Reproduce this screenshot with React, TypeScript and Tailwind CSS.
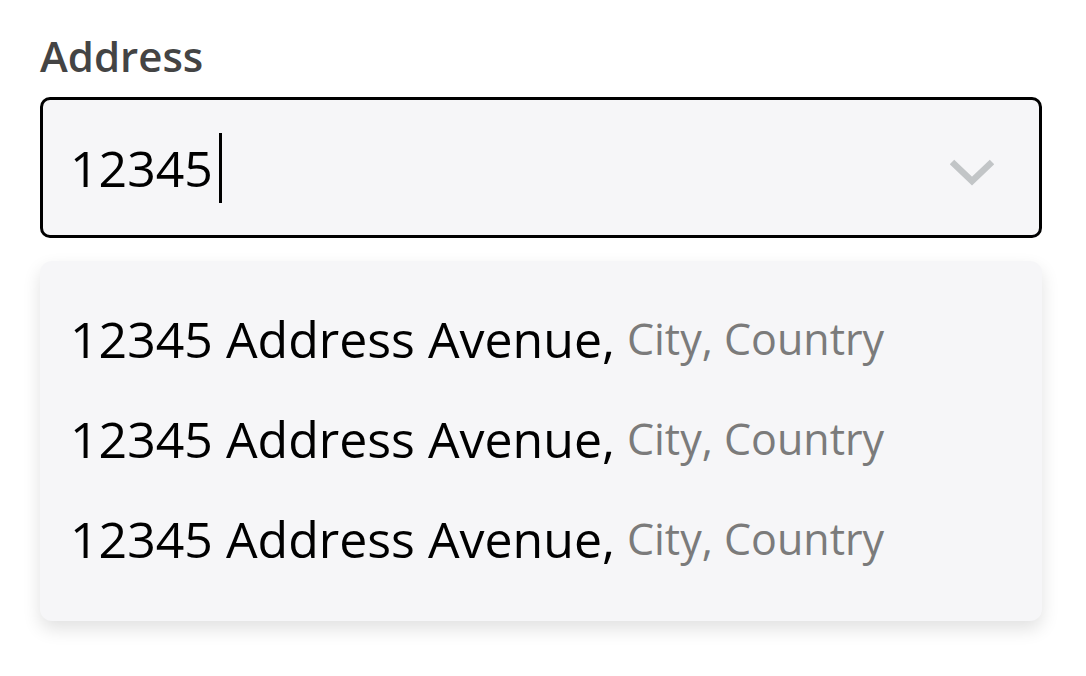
const suggestions = [
  { street: '12345 Address Avenue,', rest: 'City, Country' },
  { street: '12345 Address Avenue,', rest: 'City, Country' },
  { street: '12345 Address Avenue,', rest: 'City, Country' },
]

const App = () => {
  return (
    <div className="min-h-screen bg-white pl-10 pr-[44px] pt-[28px] font-['Open_Sans',sans-serif]">
      <label className="block text-[42px] font-semibold leading-[56px] text-[#444444]">Address</label>

      <div className="mt-[13px] flex h-[141px] items-center rounded-[10px] border-[3px] border-black bg-[#f6f6f8] pl-[27px] pr-[45px]">
        <div className="flex flex-1 items-center">
          <span className="text-[50px] leading-none text-black">12345</span>
          <span className="ml-[6px] h-[70px] w-[3px] bg-black" />
        </div>
        <svg className="mt-[10px]" width="44" height="30" viewBox="0 0 44 30" fill="none">
          <path d="M2 4 L22 23 L42 4" stroke="#c2c5c7" strokeWidth="6.5" />
        </svg>
      </div>

      <ul className="mt-[23px] rounded-[12px] bg-[#f6f6f8] pb-[32px] pt-[28px] pl-[30px] shadow-[0_8px_18px_rgba(0,0,0,0.12)]">
        {suggestions.map((s, i) => (
          <li key={i} className="flex h-[100px] items-center whitespace-nowrap">
            <span className="text-[50px] text-black">{s.street}</span>
            <span className="ml-[12px] text-[43px] text-[#7b7b7b]">{s.rest}</span>
          </li>
        ))}
      </ul>
    </div>
  )
}

export default App
